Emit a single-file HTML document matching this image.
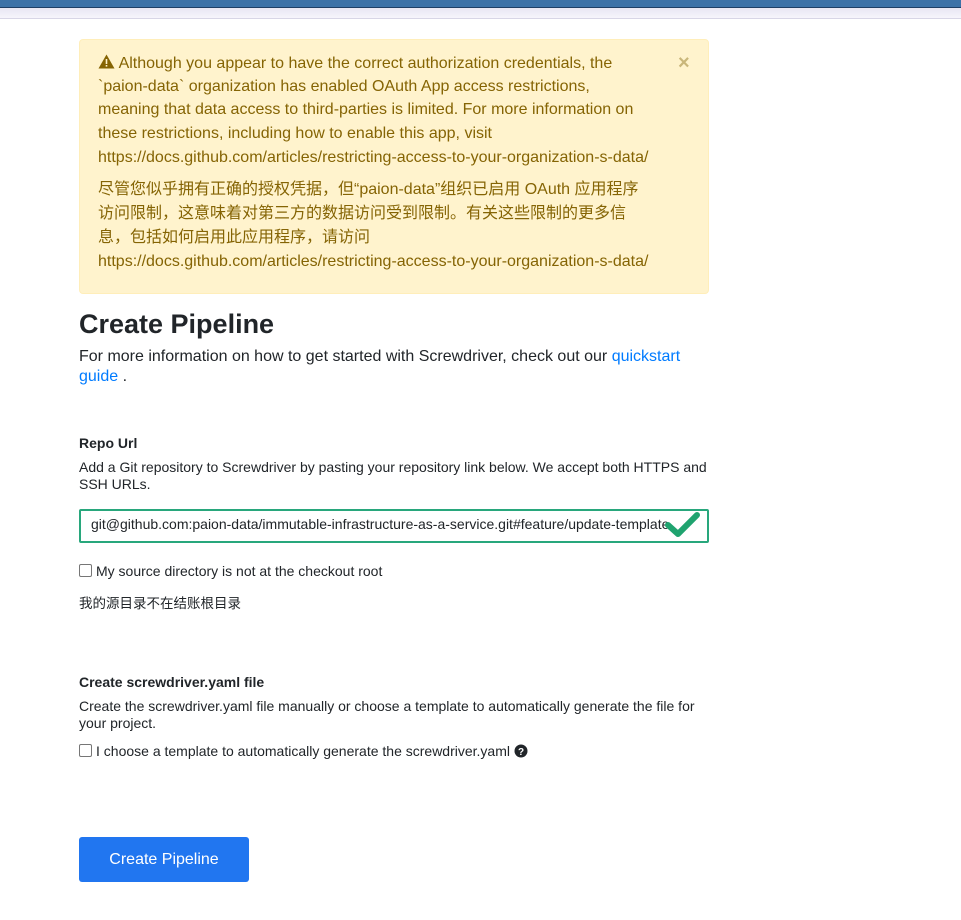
<!DOCTYPE html>
<html><head><meta charset="utf-8"><style>
body{margin:0;width:961px;height:920px;background:#fff;font-family:"Liberation Sans","Noto Sans CJK SC",sans-serif;color:#212529;position:relative;overflow:hidden}
.top{position:absolute;left:0;top:0;width:961px;height:7px;background:#3d72a8;border-bottom:1px solid #1f3f66}
.top2{position:absolute;left:0;top:8px;width:961px;height:10px;background:linear-gradient(#e8e6f3,#f6f5fb);border-bottom:1px solid #d8d6e6}
.abs{position:absolute;white-space:nowrap}
.alert{position:absolute;left:79px;top:39px;width:628px;height:253px;background:#fff3cd;border:1px solid #ffeeba;border-radius:4px;color:#856404;font-size:16px}
.alert .l{position:absolute;left:18px;white-space:nowrap}
.x{position:absolute;left:598px;top:12px;color:#c9b67a;font-size:20px;font-weight:bold}
h1{position:absolute;left:79px;top:309px;margin:0;font-size:27px;font-weight:bold}
.p{font-size:16px}
.s{font-size:14px}
a{color:#007bff;text-decoration:none}
.inp{position:absolute;left:79px;top:509px;width:626px;height:30px;border:2px solid #28a77c;border-radius:2px;box-sizing:content-box}
.cb{display:inline-block;width:11px;height:11px;border:1px solid #767676;border-radius:2px;vertical-align:-1px;margin-right:4px;background:#fff}
.btn{position:absolute;left:79px;top:837px;width:170px;height:45px;background:#2176f0;border-radius:3px;color:#fff;font-size:16px;text-align:center;line-height:45px}
</style></head><body>
<div class="top"></div><div class="top2"></div>
<div class="alert">
<div class="l" style="top:14px"><svg width="17" height="15" viewBox="0 0 17 15" style="vertical-align:-1px"><path d="M8.5 0.5L16.5 14.5H0.5Z" fill="#856404"/><rect x="7.7" y="5" width="1.6" height="5" fill="#fff3cd"/><rect x="7.7" y="11" width="1.6" height="1.6" fill="#fff3cd"/></svg> Although you appear to have the correct authorization credentials, the</div>
<div class="l" style="top:38px">`paion-data` organization has enabled OAuth App access restrictions,</div>
<div class="l" style="top:61px">meaning that data access to third-parties is limited. For more information on</div>
<div class="l" style="top:85px">these restrictions, including how to enable this app, visit</div>
<div class="l" style="top:109px">https://docs.github.com/articles/restricting-access-to-your-organization-s-data/</div>
<div class="l" style="top:135px">尽管您似乎拥有正确的授权凭据，但“paion-data”组织已启用 OAuth 应用程序</div>
<div class="l" style="top:159px">访问限制，这意味着对第三方的数据访问受到限制。有关这些限制的更多信</div>
<div class="l" style="top:183px">息，包括如何启用此应用程序，请访问</div>
<div class="l" style="top:213px">https://docs.github.com/articles/restricting-access-to-your-organization-s-data/</div>
<div class="x">×</div>
</div>
<h1>Create Pipeline</h1>
<div class="abs p" style="left:79px;top:348px">For more information on how to get started with Screwdriver, check out our <a>quickstart</a></div>
<div class="abs p" style="left:79px;top:368px"><a>guide</a> .</div>
<div class="abs s" style="left:79px;top:435px;font-weight:bold">Repo Url</div>
<div class="abs s" style="left:79px;top:459px">Add a Git repository to Screwdriver by pasting your repository link below. We accept both HTTPS and</div>
<div class="abs s" style="left:79px;top:476px">SSH URLs.</div>
<div class="inp"></div>
<div class="abs s" style="left:91px;top:516px">git@github.com:paion-data/immutable-infrastructure-as-a-service.git#feature/update-template</div>
<svg class="abs" style="left:664px;top:511px" width="38" height="28" viewBox="0 0 38 28"><path d="M4 14L14 23L33 4" stroke="#1fa36f" stroke-width="6" fill="none" stroke-linecap="round" stroke-linejoin="round"/></svg>
<div class="abs s" style="left:79px;top:563px"><span class="cb"></span>My source directory is not at the checkout root</div>
<div class="abs s" style="left:79px;top:592px;font-size:13.5px">我的源目录不在结账根目录</div>
<div class="abs s" style="left:79px;top:674px;font-weight:bold">Create screwdriver.yaml file</div>
<div class="abs s" style="left:79px;top:698px">Create the screwdriver.yaml file manually or choose a template to automatically generate the file for</div>
<div class="abs s" style="left:79px;top:715px">your project.</div>
<div class="abs s" style="left:79px;top:743px"><span class="cb"></span>I choose a template to automatically generate the screwdriver.yaml <svg width="14" height="14" viewBox="0 0 14 14" style="vertical-align:-2px"><circle cx="7" cy="7" r="6.5" fill="#212529"/><text x="7" y="11" font-size="10" font-weight="bold" fill="#fff" text-anchor="middle" font-family="Liberation Sans">?</text></svg></div>
<div class="btn">Create Pipeline</div>
</body></html>
